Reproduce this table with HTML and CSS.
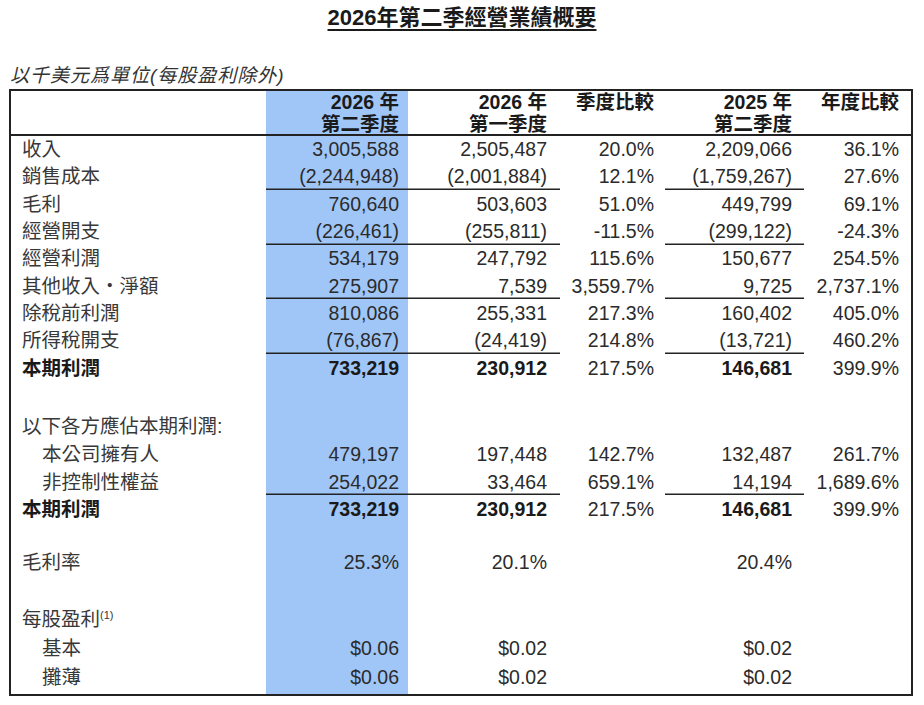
FILE: index.html
```html
<!DOCTYPE html>
<html lang="zh-Hant">
<head>
<meta charset="utf-8">
<title>2026年第二季經營業績概要</title>
<link rel="stylesheet" href="styles.css">
</head>
<body>
<main class="page">
  <h1 class="title"><span>2026年第二季經營業績概要</span></h1>
  <p class="unit">以千美元爲單位(每股盈利除外)</p>
  <div class="frame">
    <table class="results">
      <colgroup>
        <col class="c-label"><col class="c-cur"><col class="c-prev"><col class="c-qoq"><col class="c-yago"><col class="c-yoy">
      </colgroup>
      <thead>
        <tr>
          <th></th>
          <th>2026 年<br>第二季度</th>
          <th>2026 年<br>第一季度</th>
          <th>季度比較</th>
          <th>2025 年<br>第二季度</th>
          <th>年度比較</th>
        </tr>
      </thead>
      <tbody>
        <tr><td>收入</td><td>3,005,588</td><td>2,505,487</td><td>20.0%</td><td>2,209,066</td><td>36.1%</td></tr>
        <tr class="rule"><td>銷售成本</td><td>(2,244,948)</td><td>(2,001,884)</td><td>12.1%</td><td>(1,759,267)</td><td>27.6%</td></tr>
        <tr><td>毛利</td><td>760,640</td><td>503,603</td><td>51.0%</td><td>449,799</td><td>69.1%</td></tr>
        <tr class="rule"><td>經營開支</td><td>(226,461)</td><td>(255,811)</td><td>-11.5%</td><td>(299,122)</td><td>-24.3%</td></tr>
        <tr><td>經營利潤</td><td>534,179</td><td>247,792</td><td>115.6%</td><td>150,677</td><td>254.5%</td></tr>
        <tr class="rule"><td>其他收入・淨額</td><td>275,907</td><td>7,539</td><td>3,559.7%</td><td>9,725</td><td>2,737.1%</td></tr>
        <tr><td>除稅前利潤</td><td>810,086</td><td>255,331</td><td>217.3%</td><td>160,402</td><td>405.0%</td></tr>
        <tr class="rule"><td>所得稅開支</td><td>(76,867)</td><td>(24,419)</td><td>214.8%</td><td>(13,721)</td><td>460.2%</td></tr>
        <tr class="total"><td>本期利潤</td><td>733,219</td><td>230,912</td><td>217.5%</td><td>146,681</td><td>399.9%</td></tr>
        <tr class="gap gap-a"><td></td><td></td><td></td><td></td><td></td><td></td></tr>
        <tr class="h28"><td>以下各方應佔本期利潤:</td><td></td><td></td><td></td><td></td><td></td></tr>
        <tr class="h28 sub"><td>本公司擁有人</td><td>479,197</td><td>197,448</td><td>142.7%</td><td>132,487</td><td>261.7%</td></tr>
        <tr class="h27 sub rule"><td>非控制性權益</td><td>254,022</td><td>33,464</td><td>659.1%</td><td>14,194</td><td>1,689.6%</td></tr>
        <tr class="h27 total"><td>本期利潤</td><td>733,219</td><td>230,912</td><td>217.5%</td><td>146,681</td><td>399.9%</td></tr>
        <tr class="gap gap-b"><td></td><td></td><td></td><td></td><td></td><td></td></tr>
        <tr class="h28"><td>毛利率</td><td>25.3%</td><td>20.1%</td><td></td><td>20.4%</td><td></td></tr>
        <tr class="gap gap-c"><td></td><td></td><td></td><td></td><td></td><td></td></tr>
        <tr class="h28"><td>每股盈利<sup>(1)</sup></td><td></td><td></td><td></td><td></td><td></td></tr>
        <tr class="h29 sub"><td>基本</td><td>$0.06</td><td>$0.02</td><td></td><td>$0.02</td><td></td></tr>
        <tr class="h29 sub"><td>攤薄</td><td>$0.06</td><td>$0.02</td><td></td><td>$0.02</td><td></td></tr>
        <tr class="gap gap-end"><td></td><td></td><td></td><td></td><td></td><td></td></tr>
      </tbody>
    </table>
  </div>
</main>
</body>
</html>
```

FILE: styles.css
```css
* { box-sizing: border-box; }

html, body {
  margin: 0;
  background: #ffffff;
}

body {
  font-family: "Liberation Sans", "Noto Sans CJK TC", sans-serif;
  color: #2b2b2b;
}

.page {
  width: 924px;
  padding-top: 5px;
}

.title {
  margin: 0;
  text-align: center;
  font-size: 22px;
  line-height: 26px;
  font-weight: 700;
  color: #1a1a1a;
}

.title span {
  text-decoration: underline;
  text-decoration-thickness: 2px;
  text-underline-offset: 4px;
}

.unit {
  margin: 33px 0 1px 10px;
  font-size: 19px;
  line-height: 24px;
  font-style: italic;
  letter-spacing: 1px;
  color: #333333;
}

.frame {
  margin-left: 9px;
  width: 904px;
  border: 2px solid #222222;
}

.results {
  width: 900px;
  table-layout: fixed;
  border-collapse: separate;
  border-spacing: 0;
  font-size: 19.5px;
}

.c-label { width: 255px; }
.c-cur { width: 142px; background: #a0c6f8; }
.c-prev { width: 152px; }
.c-qoq { width: 105px; }
.c-yago { width: 139px; }
.c-yoy { width: 107px; }

.results th,
.results td {
  padding: 0;
  text-align: right;
  vertical-align: middle;
  white-space: nowrap;
  line-height: 22px;
}

.results th {
  height: 44.5px;
  vertical-align: top;
  font-weight: 700;
  color: #1a1a1a;
  box-shadow: inset 0 -2px 0 #222222;
}

.results tr > :nth-child(2) { padding-right: 9px; }
.results tr > :nth-child(3) { padding-right: 13px; }
.results tr > :nth-child(4) { padding-right: 11px; }
.results tr > :nth-child(5) { padding-right: 12px; }
.results tr > :nth-child(6) { padding-right: 12px; }

.results td:first-child {
  text-align: left;
  padding-left: 11px;
  color: #383838;
}

.results tbody tr { height: 27.3px; }
.results tbody tr.h27 { height: 27px; }
.results tbody tr.h28 { height: 28px; }
.results tbody tr.h29 { height: 29px; }
.results tbody tr.gap-a { height: 31px; }
.results tbody tr.gap-b { height: 26px; }
.results tbody tr.gap-c { height: 29px; }
.results tbody tr.gap-end { height: 3px; }

.results tr.gap td {
  line-height: 0;
  font-size: 0;
}

.results tr.sub td:first-child { padding-left: 31px; }

.results tr.rule td:nth-child(2),
.results tr.rule td:nth-child(3),
.results tr.rule td:nth-child(5) {
  box-shadow: inset 0 -1.5px 0 #222222;
}

.results tr.total td {
  font-weight: 700;
  color: #1a1a1a;
}

.results tr.total td:nth-child(4),
.results tr.total td:nth-child(6) {
  font-weight: 400;
  color: #2b2b2b;
}

.results sup {
  font-size: 11px;
  line-height: 0;
  vertical-align: 7px;
}
```
